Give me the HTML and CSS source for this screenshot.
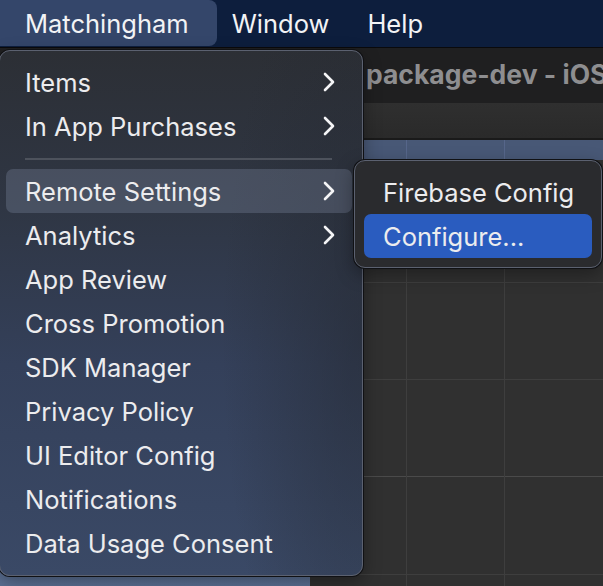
FILE: index.html
```html
<!DOCTYPE html>
<html>
<head>
<meta charset="utf-8">
<link rel="stylesheet" href="styles.css">
</head>
<body>
<div class="screen">
  <div class="menubar">
    <div class="mb-item app">Matchingham</div>
    <div class="mb-item win">Window</div>
    <div class="mb-item">Help</div>
  </div>
  <div class="window">
    <div class="titlebar"><span class="title">package-dev - iOS</span></div>
    <div class="toolbar"></div>
    <div class="content">
      <div class="leftpanel"></div>
      <div class="canvas">
        <div class="strip"></div>
        <div class="grid"></div>
      </div>
    </div>
  </div>

  <div class="menu main-menu">
    <div class="item"><span>Items</span><svg class="chev" viewBox="0 0 12 20"><path d="M2 2 L10 10 L2 18"/></svg></div>
    <div class="item"><span>In App Purchases</span><svg class="chev" viewBox="0 0 12 20"><path d="M2 2 L10 10 L2 18"/></svg></div>
    <div class="sep"></div>
    <div class="item hover"><span>Remote Settings</span><svg class="chev" viewBox="0 0 12 20"><path d="M2 2 L10 10 L2 18"/></svg></div>
    <div class="item"><span>Analytics</span><svg class="chev" viewBox="0 0 12 20"><path d="M2 2 L10 10 L2 18"/></svg></div>
    <div class="item"><span>App Review</span></div>
    <div class="item"><span>Cross Promotion</span></div>
    <div class="item"><span>SDK Manager</span></div>
    <div class="item"><span>Privacy Policy</span></div>
    <div class="item"><span>UI Editor Config</span></div>
    <div class="item"><span>Notifications</span></div>
    <div class="item"><span>Data Usage Consent</span></div>
  </div>

  <div class="menu sub-menu">
    <div class="item"><span>Firebase Config</span></div>
    <div class="item selected"><span>Configure...</span></div>
  </div>
</div>
</body>
</html>
```
FILE: styles.css
```css
* { box-sizing: border-box; }
html, body { margin: 0; padding: 0; background: #2f2f2f; }
.screen {
  position: relative;
  width: 603px;
  height: 586px;
  overflow: hidden;
  font-family: "Inter", "Noto Sans", sans-serif;
  color: #ececee;
}
.menubar {
  display: flex;
  height: 48px;
  background: #0d1e3d;
  align-items: stretch;
  font-size: 25.5px;
  border-bottom: 1px solid #0a0a0c;
}
.mb-item {
  display: flex;
  align-items: center;
  padding: 0 19px;
  color: #f2f3f5;
}
.mb-item.app {
  padding: 0 28px 0 25px;
  background: #34466a;
  border-radius: 0 8px 8px 0;
  margin-bottom: 1px;
}
.mb-item.win { padding-left: 15px; }

.window { display: flex; flex-direction: column; height: 538px; }
.titlebar {
  height: 55px;
  background: #1f1f20;
  display: flex;
  align-items: center;
  padding-left: 366px;
}
.title {
  font-weight: 700;
  font-size: 26.5px;
  color: #8e8e90;
  white-space: nowrap;
  margin-top: -3px;
}
.toolbar {
  height: 37px;
  background: linear-gradient(#2f2f2f, #2a2a2a);
  border-bottom: 2px solid #1a1a1a;
}
.content { flex: 1; display: flex; }
.leftpanel {
  width: 310px;
  background: linear-gradient(#4a5a78, #5b7094);
}
.canvas { flex: 1; display: flex; flex-direction: column; }
.strip {
  height: 20px;
  background:
    linear-gradient(90deg, transparent 96px, #56668a 96px, #56668a 97px, transparent 97px, transparent 194px, #56668a 194px, #56668a 195px, transparent 195px),
    #485876;
}
.grid {
  flex: 1;
  background-color: #303030;
  background-image:
    linear-gradient(90deg, transparent 96px, #3e3e3e 96px, #3e3e3e 97px, transparent 97px, transparent 194px, #3e3e3e 194px, #3e3e3e 195px, transparent 195px),
    linear-gradient(180deg, transparent 122px, #3e3e3e 122px, #3e3e3e 123px, transparent 123px, transparent 219px, #3e3e3e 219px, #3e3e3e 220px, transparent 220px, transparent 316px, #4a4a4a 316px, #4a4a4a 317px, transparent 317px, transparent 414px, #3e3e3e 414px, #3e3e3e 415px, transparent 415px);
  background-repeat: no-repeat;
}

.menu {
  position: absolute;
  border-radius: 11px;
  font-size: 25.5px;
  border: 1px solid #5b6170;
  box-shadow: 0 0 0 1px #101114, 0 6px 18px rgba(0,0,0,0.35);
}
.main-menu {
  left: -1px;
  top: 50px;
  width: 364px;
  height: 526px;
  padding: 9px 10px 10px 6px;
  background:
    radial-gradient(ellipse 140px 420px at 100% 55%, rgba(36,40,48,0.55), rgba(36,40,48,0)),
    linear-gradient(180deg, #2c2f35 0%, #2f3644 30%, #34405a 60%, #3a4966 100%);
}
.item {
  height: 44px;
  display: flex;
  align-items: center;
  justify-content: space-between;
  padding: 0 17px 0 19px;
  border-radius: 7px;
  white-space: nowrap;
}
.item.hover { background: rgba(120,132,155,0.35); }
.chev { width: 12px; height: 20px; fill: none; stroke: #f4f4f6; stroke-width: 2.6; stroke-linecap: round; stroke-linejoin: round; }
.sep {
  height: 21px;
  display: flex;
  align-items: center;
  margin: 0 20px 0 19px;
}
.sep::before {
  content: "";
  display: block;
  width: 100%;
  height: 2px;
  background: #4d525c;
}
.sub-menu {
  left: 354px;
  top: 160px;
  width: 248px;
  height: 108px;
  padding: 9px 9px 10px 9px;
  background: #2a2b2e;
}
.sub-menu .item { padding-left: 19px; }
.item.selected { background: #2a5cbf; }
```
